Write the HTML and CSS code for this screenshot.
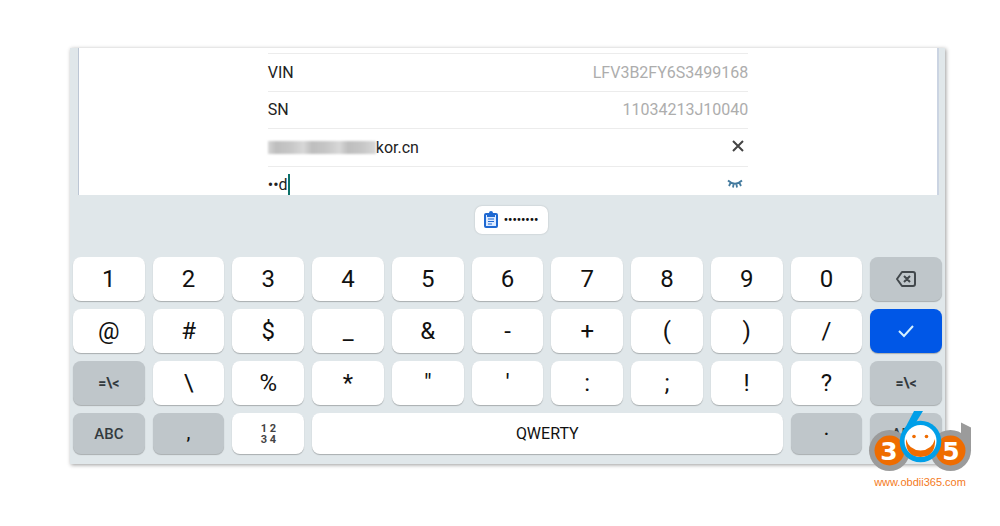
FILE: index.html
```html
<!DOCTYPE html>
<html lang="en">
<head>
    <meta charset="UTF-8">
    <meta name="viewport" content="width=device-width, initial-scale=1.0">
    <title>Account login</title>
    <link rel="stylesheet" href="styles.css">
</head>
<body>

    <main class="screen">
        <form class="form">
            <div class="fields">
                <div class="row">
                    <label for="vin">VIN</label>
                    <input id="vin" class="value" type="text" value="LFV3B2FY6S3499168" readonly>
                </div>
                <div class="row">
                    <label for="sn">SN</label>
                    <input id="sn" class="value" type="text" value="11034213J10040" readonly>
                </div>
                <div class="row">
                    <span class="masked"></span>
                    <input class="email" type="text" value="kor.cn" aria-label="Email">
                    <button type="button" class="icon-button" aria-label="Clear">
                        <svg width="20" height="20" viewBox="0 0 20 20"><path d="M5 4l10 10M15 4L5 14" fill="none" stroke="#444" stroke-width="2"/></svg>
                    </button>
                </div>
                <div class="row">
                    <input class="password" type="text" value="••d" aria-label="Password">
                    <span class="caret"></span>
                    <button type="button" class="icon-button eye" aria-label="Show password">
                        <svg width="20" height="20" viewBox="0 0 20 20"><path d="M3 5.500Q10 12 17 5.500M5.500 8l-1.500 3M8.500 9.500l-.5 3M11.500 9.500l.5 3M14.500 8l1.500 3" fill="none" stroke="#437a9e" stroke-width="1.800"/></svg>
                    </button>
                </div>
            </div>
        </form>

        <section class="keyboard">
            <div class="suggestions">
                <button type="button" class="chip" aria-label="Paste">
                    <svg width="16" height="18" viewBox="0 0 16 18">
                        <rect x="2" y="3" width="12" height="13" rx="1" fill="#dceaff" stroke="#1f69d2" stroke-width="2"/>
                        <path d="M4 2h2a2 2 0 0 1 4 0h2v4H4z" fill="#1f69d2"/>
                        <path d="M5 8h6M5 10.500h6M5 13h4" stroke="#1f69d2" stroke-width="1"/>
                    </svg>
                    <span>••••••••</span>
                </button>
            </div>
            <div class="keys">
                <button type="button">1</button>
                <button type="button">2</button>
                <button type="button">3</button>
                <button type="button">4</button>
                <button type="button">5</button>
                <button type="button">6</button>
                <button type="button">7</button>
                <button type="button">8</button>
                <button type="button">9</button>
                <button type="button">0</button>
                <button type="button" class="dark" aria-label="Backspace">
                    <svg width="22" height="18" viewBox="0 0 22 18"><path d="M7 2h11q2 0 2 2v10q0 2-2 2H7L2 9zM9 6l6 6M15 6l-6 6" fill="none" stroke="#42484c" stroke-width="2" stroke-linejoin="round"/></svg>
                </button>

                <button type="button">@</button>
                <button type="button">#</button>
                <button type="button">$</button>
                <button type="button">_</button>
                <button type="button">&amp;</button>
                <button type="button">-</button>
                <button type="button">+</button>
                <button type="button">(</button>
                <button type="button">)</button>
                <button type="button">/</button>
                <button type="button" class="enter" aria-label="Done">
                    <svg width="18" height="14" viewBox="0 0 18 14"><path d="M2 7l5 5L16 2" fill="none" stroke="#d4f1ff" stroke-width="2"/></svg>
                </button>

                <button type="button" class="dark symbols">=\&lt;</button>
                <button type="button">\</button>
                <button type="button">%</button>
                <button type="button">*</button>
                <button type="button">"</button>
                <button type="button">'</button>
                <button type="button">:</button>
                <button type="button">;</button>
                <button type="button">!</button>
                <button type="button">?</button>
                <button type="button" class="dark symbols">=\&lt;</button>

                <button type="button" class="dark abc">ABC</button>
                <button type="button" class="dark punct">,</button>
                <button type="button" class="numpad">1 2<br>3 4</button>
                <button type="button" class="space">QWERTY</button>
                <button type="button" class="dark punct">·</button>
                <button type="button" class="dark abc">ABC</button>
            </div>
        </section>

        <div class="watermark">
            <svg width="104" height="62" viewBox="868 410 104 62">
                <path d="M961 422.500l10 5V451h-10z" fill="#9b9b9b"/>
                <circle cx="889.500" cy="450.500" r="20.500" fill="#9b9b9b"/>
                <circle cx="950.500" cy="450.500" r="20.500" fill="#9b9b9b"/>
                <circle cx="889.500" cy="450.500" r="15" fill="#ef6c00"/>
                <circle cx="950.500" cy="450.500" r="15" fill="#ef6c00"/>
                <path d="M914 411h9l-8 13-12 8z" fill="#009fe8"/>
                <circle cx="920.500" cy="441.500" r="20.800" fill="#009fe8"/>
                <circle cx="920.500" cy="441" r="16" fill="#fff"/>
                <circle cx="914" cy="436.500" r="1.800" fill="#ef6c00"/>
                <circle cx="926.500" cy="436.500" r="1.800" fill="#ef6c00"/>
                <path d="M906 439Q909 450 920.500 450.500Q932 450 935 439Q936 456.500 920.500 457Q905 456.500 906 439z" fill="#ef6c00"/>
                <text x="889" y="459.500" class="digit">3</text>
                <text x="951" y="459.500" class="digit">5</text>
            </svg>
            <a href="#">www.obdii365.com</a>
        </div>
    </main>

</body>
</html>
```
FILE: styles.css
```css
* {
    box-sizing: border-box;
}

body {
    margin: 0;
    padding: 48px 55px 60px 70px;
    background: #fff;
    font-family: Roboto, "Liberation Sans", sans-serif;
    font-size: 16px;
    color: #222;
}

button, input {
    font: inherit;
    color: inherit;
    border: none;
    padding: 0;
    background: none;
    outline: none;
}

button {
    cursor: pointer;
}

.screen {
    position: relative;
    background: #e0e7ea;
    box-shadow: 1px 1px 4px rgba(0, 0, 0, 0.4);
}

/* account form */
.form {
    height: 147px;
    margin: 0 6px 0 8px;
    padding-top: 5px;
    overflow: hidden;
    background: #fff;
    border-left: 1px solid #bcc6d4;
    border-right: 2px solid #cbd4e2;
}

.fields {
    display: flex;
    flex-direction: column;
    width: 56%;
    height: 150px;
    margin: 0 auto;
}

.row {
    flex: 1;
    display: flex;
    align-items: center;
    border-top: 1px solid #ececec;
}

.row input {
    min-width: 0;
}

.row .value {
    flex: 1;
    text-align: right;
    color: #adadad;
}

.masked {
    width: 108px;
    height: 13px;
    background: repeating-linear-gradient(90deg, #d6d6d6 0, #bebebe 8px, #c6c6c6 22px, #d8d8d8 36px);
    filter: blur(1px);
}

.row .email {
    flex: 1;
}

.row .password {
    width: 20px;
}

.caret {
    width: 2px;
    height: 22px;
    background: #0c7068;
}

.icon-button {
    display: flex;
    margin-left: auto;
}

.eye {
    margin-right: 3px;
}

/* keyboard */
.keyboard {
    padding: 11px 3px 10px;
}

.suggestions {
    display: flex;
    justify-content: center;
    padding-left: 8px;
    margin-bottom: 23px;
}

.chip {
    display: flex;
    align-items: center;
    gap: 5px;
    height: 28px;
    padding: 0 10px 0 8px;
    border-radius: 7px;
    background: #fff;
    box-shadow: 0 0 2px rgba(0, 0, 0, 0.2);
    font-size: 12px;
    font-weight: 700;
    color: #111;
}

.keys {
    display: grid;
    grid-template-columns: repeat(11, 1fr);
    grid-template-rows: 44px 44px 44px 41px;
    gap: 8px;
}

.keys button {
    display: flex;
    align-items: center;
    justify-content: center;
    border-radius: 8px;
    background: #fff;
    box-shadow: 0 1px 1px rgba(0, 0, 0, 0.25);
    font-size: 24px;
    color: #111;
}

.keys .dark {
    background: #bfc6ca;
    color: #333a3e;
}

.keys .enter {
    background: #0057e7;
}

.keys .symbols {
    font-size: 14px;
    font-weight: 700;
}

.keys .abc {
    font-size: 15px;
    font-weight: 500;
}

.keys .punct {
    font-weight: 700;
    font-size: 16px;
    color: #111;
}

.keys .numpad {
    font-size: 11px;
    font-weight: 700;
    line-height: 11px;
    color: #444;
}

.keys .space {
    grid-column: span 6;
    font-size: 16px;
}

/* site mark over the corner */
.watermark {
    position: absolute;
    right: -27px;
    bottom: -25px;
    display: flex;
    flex-direction: column;
    align-items: center;
    gap: 3px;
}

.watermark a {
    font-family: "Liberation Sans", Arial, sans-serif;
    font-size: 11px;
    line-height: 14px;
    color: #f47a1c;
    text-decoration: none;
}

.digit {
    font-family: "DejaVu Sans", sans-serif;
    font-size: 25px;
    font-weight: 700;
    text-anchor: middle;
    fill: #fff;
}
```
